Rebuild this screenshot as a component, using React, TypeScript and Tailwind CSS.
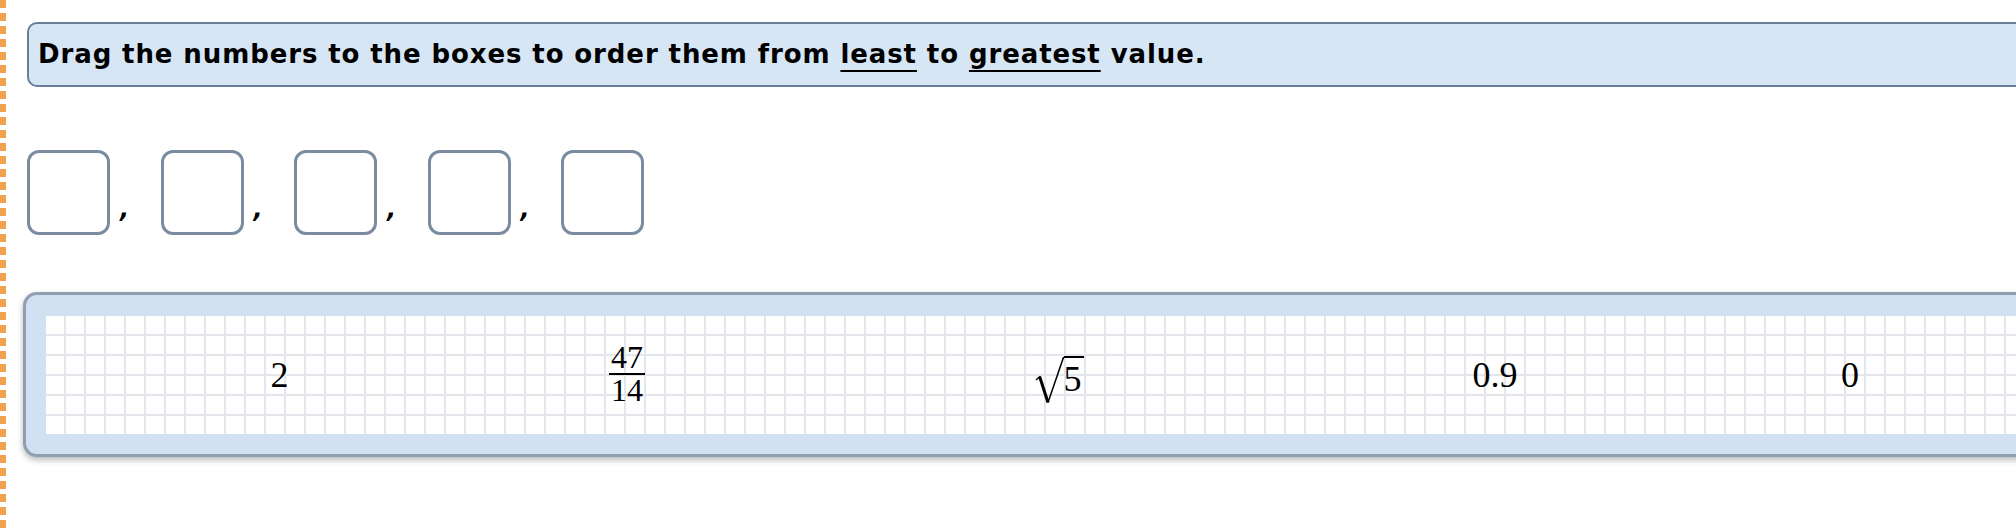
import React from "react";

// answer slots shown above the tray
const slots = [0, 1, 2, 3, 4];

const Fraction = ({ top, bottom }: { top: string; bottom: string }) => (
    <div className="flex flex-col items-stretch mt-[-3px] text-[32px] leading-none">
        <span className="px-[2px] text-center">{top}</span>
        <span className="h-[2px] bg-black"></span>
        <span className="px-[2px] text-center mt-[-1px]">{bottom}</span>
    </div>
);

const Root = ({ value }: { value: string }) => (
    <div className="flex items-start mt-[10px]">
        <svg width="29" height="48" viewBox="0 0 29 48" className="block">
            <path d="M1 24 L5 20.5" stroke="black" strokeWidth="1.4" fill="none" />
            <path d="M4.6 20.5 L13 46.5" stroke="black" strokeWidth="3" fill="none" />
            <path d="M13 46.5 L28.6 1" stroke="black" strokeWidth="1.5" fill="none" />
        </svg>
        <span className="border-t-2 border-black pt-[3px] pr-[2px] text-[36px] leading-none">{value}</span>
    </div>
);

export default function App() {
    return (
        <div className="w-full min-h-screen bg-white overflow-hidden flex">
            <div className="w-[6px] shrink-0 self-stretch min-h-[532px] bg-[repeating-linear-gradient(to_bottom,#f0a24e_0px,#f0a24e_8px,transparent_8px,transparent_13px)]"></div>
            <div className="pl-[21px] pt-[22px] w-[2150px] shrink-0">
                {/* instruction */}
                <div className="w-[2120px] h-[65px] border-2 border-[#6b7e97] bg-[#d6e6f5] rounded-[10px] flex items-center pl-[9px]">
                    <p className="font-['DejaVu_Sans',sans-serif] font-bold text-[26px] tracking-[0.9px] text-black whitespace-nowrap">
                        Drag the numbers to the boxes to order them from{" "}
                        <span className="underline decoration-2 underline-offset-[7px]">least</span> to{" "}
                        <span className="underline decoration-2 underline-offset-[7px]">greatest</span> value.
                    </p>
                </div>

                {/* drop boxes */}
                <div className="flex mt-[63px]">
                    {slots.map((s) => (
                        <div key={s} className="flex">
                            <div className="w-[83px] h-[85px] border-[3px] border-[#7b8ca1] rounded-[12px] bg-white"></div>
                            {s < slots.length - 1 && (
                                <div className="w-[50.5px] pl-[10px] pt-[47px] font-['DejaVu_Sans',sans-serif] font-bold italic text-[24px] leading-none text-black">,</div>
                            )}
                        </div>
                    ))}
                </div>

                {/* number tray */}
                <div className="mt-[57px] -ml-[4px] w-[2124px] border-[3px] border-[#8f9eb0] bg-[#d2e1f2] rounded-[14px] pt-[21px] pb-[20px] pl-[20px] shadow-[0_3px_6px_rgba(0,0,0,0.28)]">
                    <div className="h-[118px] bg-white bg-[linear-gradient(to_right,transparent_18px,#e3e6ea_18px),linear-gradient(to_bottom,transparent_18px,#e3e6ea_18px)] bg-[length:20px_20px] flex items-center font-['Liberation_Serif',serif] text-black">
                        <div className="w-[80px] ml-[193.5px] flex justify-center text-[36px] leading-none">2</div>
                        <div className="w-[80px] ml-[267.5px] flex justify-center">
                            <Fraction top="47" bottom="14" />
                        </div>
                        <div className="w-[80px] ml-[352px] flex justify-center">
                            <Root value="5" />
                        </div>
                        <div className="w-[80px] ml-[356px] flex justify-center text-[36px] leading-none">0.9</div>
                        <div className="w-[80px] ml-[275px] flex justify-center text-[36px] leading-none">0</div>
                    </div>
                </div>
            </div>
        </div>
    );
}
